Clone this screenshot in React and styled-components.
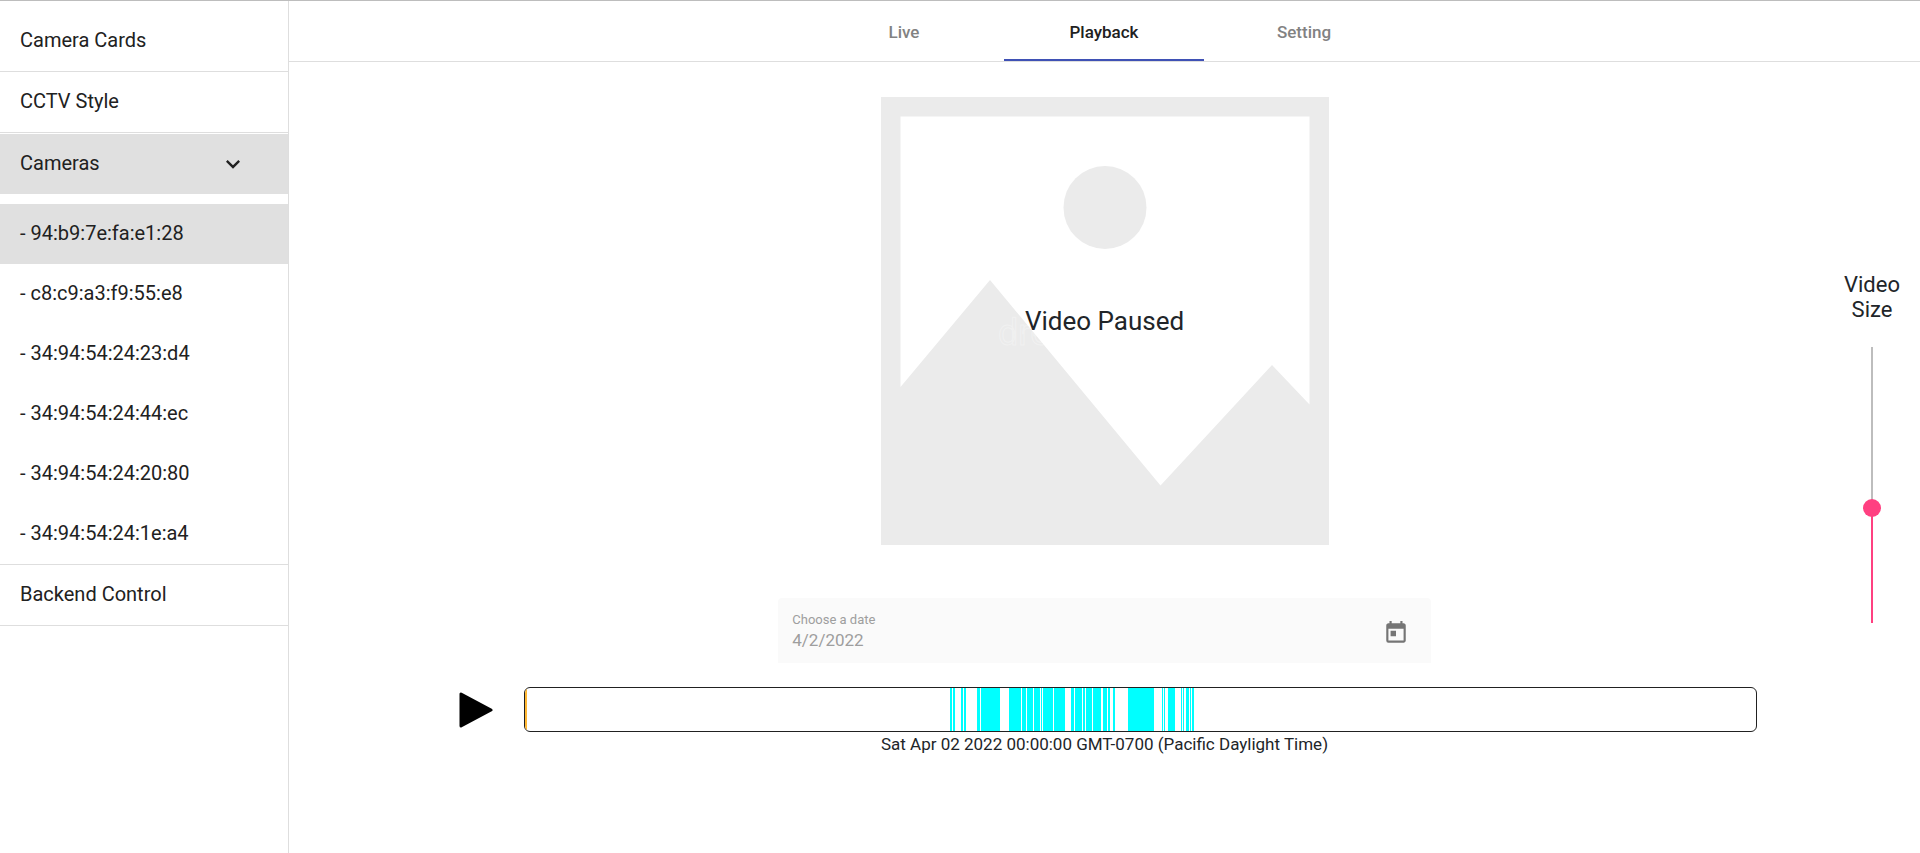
import React, { useState } from "react";
import styled, { createGlobalStyle } from "styled-components";
import { MdExpandMore, MdToday } from "react-icons/md";

const GlobalStyle = createGlobalStyle`
  *, *::before, *::after { box-sizing: border-box; }
  body {
    margin: 0;
    background: #fff;
    color: #212529;
    font-family: Roboto, "Liberation Sans", sans-serif;
    font-size: 17px;
  }
  button, input { font: inherit; color: inherit; }
`;

const Shell = styled.div`
  display: flex;
  min-height: 100vh;
  border-top: 1px solid #bdbdbd;
`;

const Sidebar = styled.nav`
  flex: none;
  width: 289px;
  padding-top: 10px;
  border-right: 1px solid #dedede;
  color: #212121;
`;

const NavGroup = styled.div`
  border-bottom: 1px solid #dedede;
`;

const NavItem = styled.a`
  display: flex;
  align-items: center;
  justify-content: space-between;
  height: 60px;
  padding: 0 41px 1px 20px;
  background: ${(p) => (p.$active ? "#e0e0e0" : "transparent")};
  color: inherit;
  font-size: 20px;
  line-height: 23px;
  text-decoration: none;
`;

const NavToggle = styled(NavItem)`
  width: 100%;
  margin-top: 1px;
  border: 0;
`;

const CameraList = styled.div`
  padding-top: 10px;
`;

const Main = styled.main`
  flex: 1;
  min-width: 0;
`;

const TabBar = styled.div`
  display: flex;
  justify-content: center;
  padding-right: 1px;
  border-bottom: 1px solid #dedede;
`;

const Tab = styled.button`
  width: 200px;
  height: 60px;
  padding: 4px 0 0;
  border: 0;
  border-bottom: 2px solid ${(p) => (p.$active ? "#3f51b5" : "transparent")};
  background: none;
  color: ${(p) => (p.$active ? "#212121" : "#828282")};
  font-weight: 500;
`;

const Playback = styled.div`
  position: relative;
  display: flex;
  flex-direction: column;
  align-items: center;
  padding-top: 35px;
`;

const Video = styled.div`
  display: grid;
  place-items: center;
  width: 448px;
  height: 448px;
  & > * { grid-area: 1 / 1; }
`;

const VideoStatus = styled.p`
  margin: 0;
  font-size: 26px;
  line-height: 32px;
`;

const DateField = styled.div`
  display: flex;
  align-items: center;
  justify-content: space-between;
  width: 40%;
  height: 65px;
  margin-top: 53px;
  padding: 0 22px 0 14px;
  border-radius: 4px 4px 0 0;
  background: #fafafa;
`;

const DateText = styled.div`
  display: flex;
  flex-direction: column;
  color: #9e9e9e;
`;

const DateLabel = styled.label`
  font-size: 13px;
  line-height: 18px;
`;

const DateInput = styled.input`
  width: 200px;
  height: 22px;
  padding: 0;
  border: 0;
  background: none;
`;

const IconButton = styled.button`
  display: flex;
  padding: 0;
  border: 0;
  background: none;
  color: #000;
`;

const CalendarButton = styled(IconButton)`
  padding-top: 4px;
  color: #757575;
`;

const Transport = styled.div`
  display: flex;
  align-items: center;
  gap: 31px;
  align-self: stretch;
  margin: 24px 163px 0 170px;
`;

const Timeline = styled.div`
  flex: 1;
  height: 45px;
  overflow: hidden;
  border: 1px solid #212121;
  border-radius: 6px;
`;

const TimelineChart = styled.svg`
  display: block;
  width: 100%;
  height: 100%;
`;

const Timestamp = styled.p`
  margin: 0;
  line-height: 25px;
`;

const SizeControl = styled.div`
  position: absolute;
  top: 210px;
  right: 16px;
  display: flex;
  flex-direction: column;
  align-items: center;
  gap: 25px;
`;

const SizeLabel = styled.label`
  width: 64px;
  font-size: 22px;
  line-height: 25px;
  text-align: center;
`;

const SizeSlider = styled.input`
  width: 18px;
  height: 276px;
  margin: 0;
  writing-mode: vertical-lr;
  direction: rtl;
  appearance: none;
  background: linear-gradient(to top, #ff4081 ${(p) => p.value}%, #bdbdbd ${(p) => p.value}%)
    center / 2px 100% no-repeat;
  &::-webkit-slider-thumb {
    appearance: none;
    width: 18px;
    height: 18px;
    border-radius: 50%;
    background: #ff4081;
  }
`;

const cameras = [
  "94:b9:7e:fa:e1:28",
  "c8:c9:a3:f9:55:e8",
  "34:94:54:24:23:d4",
  "34:94:54:24:44:ec",
  "34:94:54:24:20:80",
  "34:94:54:24:1e:a4",
];

// Recorded stretches of the day as [start, length] on a 1231-unit timeline.
const recordings = [
  [425, 2], [428, 2], [436, 2], [439, 2], [452, 3], [456, 19], [484, 12],
  [497, 4], [502, 6], [509, 6], [516, 1], [518, 10], [529, 11], [546, 3],
  [550, 7], [558, 2], [561, 6], [568, 8], [578, 4], [583, 2], [588, 2],
  [603, 26], [637, 1], [639, 1], [643, 7], [656, 1], [658, 1], [661, 3],
  [665, 1], [667, 2],
];

function Placeholder() {
  return (
    <svg width="448" height="448" viewBox="0 0 448 448" aria-hidden="true">
      <rect width="448" height="448" fill="#ebebeb" />
      <path d="M19.5 19.5H428.5V307.5L391 268L279.5 388.5L109 183L19.5 290Z" fill="#fff" />
      <circle cx="224" cy="110.500" r="41.500" fill="#ebebeb" />
      <text x="117" y="248" fontSize="36" fill="none" stroke="#fff" strokeOpacity="0.3">
        dreamstime.
      </text>
    </svg>
  );
}

export default function App() {
  const [size, setSize] = useState(41);
  const [tab, setTab] = useState("Playback");
  const [open, setOpen] = useState(true);
  const [date, setDate] = useState("4/2/2022");

  return (
    <>
      <GlobalStyle />
      <Shell>
        <Sidebar>
          <NavGroup><NavItem href="#cards">Camera Cards</NavItem></NavGroup>
          <NavGroup><NavItem href="#cctv">CCTV Style</NavItem></NavGroup>
          <NavGroup>
            <NavToggle as="button" $active aria-expanded={open} onClick={() => setOpen(!open)}>
              Cameras <MdExpandMore size={28} />
            </NavToggle>
            {open && (
              <CameraList>
                {cameras.map((id, i) => (
                  <NavItem key={id} href={`#${id}`} $active={i === 0}>- {id}</NavItem>
                ))}
              </CameraList>
            )}
          </NavGroup>
          <NavGroup><NavItem href="#backend">Backend Control</NavItem></NavGroup>
        </Sidebar>
        <Main>
          <TabBar role="tablist">
            {["Live", "Playback", "Setting"].map((name) => (
              <Tab key={name} role="tab" aria-selected={tab === name} $active={tab === name} onClick={() => setTab(name)}>
                {name}
              </Tab>
            ))}
          </TabBar>
          <Playback>
            <Video>
              <Placeholder />
              <VideoStatus>Video Paused</VideoStatus>
            </Video>
            <DateField>
              <DateText>
                <DateLabel htmlFor="date">Choose a date</DateLabel>
                <DateInput id="date" value={date} onChange={(e) => setDate(e.target.value)} />
              </DateText>
              <CalendarButton aria-label="Open calendar"><MdToday size={26} /></CalendarButton>
            </DateField>
            <Transport>
              <IconButton aria-label="Play">
                <svg width="34" height="38" viewBox="0 0 34 38">
                  <path d="M2 3V35L32 19Z" fill="currentColor" stroke="currentColor" strokeWidth="3" strokeLinejoin="round" />
                </svg>
              </IconButton>
              <Timeline>
                <TimelineChart viewBox="0 0 1231 43" preserveAspectRatio="none" shapeRendering="crispEdges">
                  <rect width="2" height="43" fill="#ffb732" />
                  {recordings.map(([x, w]) => (
                    <rect key={x} x={x} width={w} height="43" fill="#0ff" />
                  ))}
                </TimelineChart>
              </Timeline>
            </Transport>
            <Timestamp>Sat Apr 02 2022 00:00:00 GMT-0700 (Pacific Daylight Time)</Timestamp>
            <SizeControl>
              <SizeLabel htmlFor="size">Video Size</SizeLabel>
              <SizeSlider id="size" type="range" value={size} onChange={(e) => setSize(Number(e.target.value))} />
            </SizeControl>
          </Playback>
        </Main>
      </Shell>
    </>
  );
}
